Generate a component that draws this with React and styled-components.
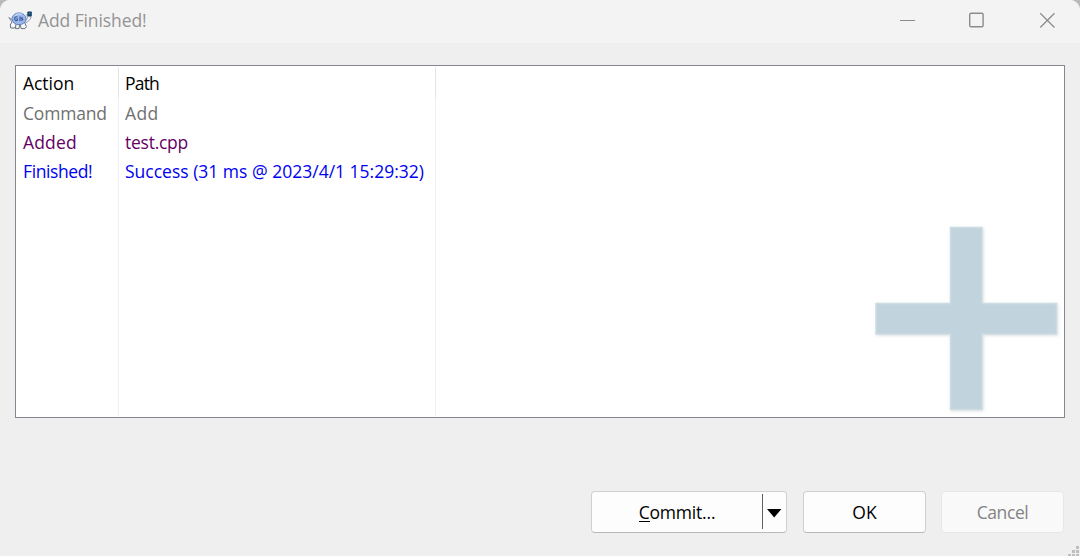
import React from "react";
import styled, { createGlobalStyle } from "styled-components";

const GlobalStyle = createGlobalStyle`
  * { box-sizing: border-box; }
  body { margin: 0; background: #b9b9b9; overflow: hidden; }
`;

const Window = styled.div`
  width: 1080px;
  height: 556px;
  display: flex;
  flex-direction: column;
  position: relative;
  overflow: hidden;
  background: #efefef;
  border-radius: 10px 10px 0 0;
  font-family: "Open Sans", "Noto Sans", sans-serif;
  font-size: 17.5px;
  font-weight: 400;
  color: #000;
`;

const TitleBar = styled.header`
  height: 43px;
  flex: none;
  display: flex;
  align-items: center;
  padding: 0 0 3px 8px;
  background: #f3f3f3;
`;

const AppIcon = styled.svg`
  width: 25px;
  height: 20px;
  display: block;
  margin-right: 5px;
`;

const Label = styled.span`
  display: inline-block;
  white-space: pre;
  letter-spacing: ${(p) => p.$track || 0}px;
`;

const Title = styled(Label)`
  flex: 1;
  color: #939393;
`;

const CaptionIcon = styled.svg`
  width: 16px;
  height: 16px;
  display: block;
  margin-right: ${(p) => p.$gap}px;
  fill: none;
  stroke: #8b8b8b;
`;

const ListPanel = styled.main`
  height: 353px;
  flex: none;
  margin: 22px 15px 0;
  display: flex;
  position: relative;
  padding: 1px 0 1px;
  border: 1px solid #828790;
  background: #fff;
`;

const Column = styled.section`
  width: ${(p) => p.$width}px;
  background: linear-gradient(#e5e5e5 31px, #e9f2fb 31px) right top / 1px 100% no-repeat;
  padding: 1px 0 0 ${(p) => p.$inset}px;
`;

const Cell = styled.div`
  height: ${(p) => p.$height || 29}px;
  line-height: ${(p) => p.$height || 29}px;
  color: ${(p) => p.$color || "#000"};
`;

const Watermark = styled.svg`
  position: absolute;
  right: 2px;
  bottom: 2px;
  width: 190px;
  height: 192px;
`;

const Footer = styled.footer`
  display: flex;
  gap: 15px;
  justify-content: flex-end;
  padding: 73px 16px 0 0;
`;

const Button = styled.button`
  width: ${(p) => p.$width}px;
  height: 42px;
  display: flex;
  align-items: center;
  justify-content: center;
  padding: 0;
  font: inherit;
  color: #000;
  background: #fdfdfd;
  border: 1px solid #d0d0d0;
  border-bottom-color: #b9b9b9;
  border-radius: 4px;

  &:disabled {
    color: #838383;
    background: #f9f9f9;
    border-color: #e8e8e8;
  }
`;

const SplitButton = styled(Button)`
  margin-right: 1px;
`;

const CommitText = styled.span`
  flex: 1;
  text-align: center;
`;

const Mnemonic = styled.span`
  border-bottom: 1px solid #000;
  display: inline-block;
  line-height: 17px;
`;

const DropPart = styled.span`
  width: 24px;
  height: 35px;
  margin-bottom: 1px;
  display: flex;
  align-items: center;
  padding: 4px 0 0 4px;
  border-left: 1px solid #5f5f5f;
`;

const SizeGrip = styled.svg`
  position: absolute;
  right: 0;
  bottom: 0;
  width: 12px;
  height: 10px;
`;

const actions = [
  { text: "Action", height: 31, track: -0.05 },
  { text: "Command", color: "#707070", track: -0.2 },
  { text: "Added", color: "#640064", track: 0.15 },
  { text: "Finished!", color: "#0000f0", track: -0.4 },
];

const paths = [
  { text: "Path", height: 31, track: -0.8 },
  { text: "Add", color: "#707070", track: 0.4 },
  { text: "test.cpp", color: "#640064", track: -0.25 },
  { text: "Success (31 ms @ 2023/4/1 15:29:32)", color: "#0000f0" },
];

function ListColumn({ cells, width, inset }) {
  return (
    <Column $width={width} $inset={inset}>
      {cells.map((c) => (
        <Cell key={c.text} $color={c.color} $height={c.height}>
          <Label $track={c.track}>{c.text}</Label>
        </Cell>
      ))}
    </Column>
  );
}

function TurtleIcon() {
  return (
    <AppIcon viewBox="0 0 25 20">
      <path d="M4 12L0.8 7.5L3 9.2L6 9.5" fill="#e8edf2" stroke="#77838f" strokeWidth="0.9" />
      <path d="M17.5 11L19.5 8L18.8 4.5L22.5 3.8L23 8L20 11.5L17 13" fill="#f2f5f8" stroke="#87909c" strokeWidth="0.9" />
      <rect x="19.4" y="1.4" width="4.4" height="5" rx="0.8" fill="#123f62" />
      <rect x="20.8" y="2.6" width="1.5" height="2" fill="#247a94" />
      <g fill="#f4f6f8" stroke="#68717d" strokeWidth="1">
        <path d="M4 12L2.2 15L2.8 18H6.5L8.5 15" />
        <path d="M8 14L7.5 18.6H11L11.5 15" />
        <path d="M12 14L13.2 18.6H17L18.4 16.5L16.5 12.5" />
      </g>
      <ellipse cx="11" cy="8.8" rx="7" ry="5.9" fill="#9bb8ee" stroke="#6480bd" strokeWidth="1" />
      <path d="M6.8 5.8Q10 2.8 14 4.4" fill="none" stroke="#c4d6fa" strokeWidth="1.3" />
      <path d="M9.4 7C7.2 6.3 6.6 7.6 6.8 9.2C7 11 8.8 11 9.4 10.2V9H8.4M12 6.6V11M14.5 7.2L13.4 8.3L14.8 9.4L13.3 10.6" fill="none" stroke="#35528d" strokeWidth="1.1" />
    </AppIcon>
  );
}

export default function App() {
  return (
    <>
      <GlobalStyle />
      <Window>
        <TitleBar>
          <TurtleIcon />
          <Title $track={-0.1}>Add Finished!</Title>
          <CaptionIcon $gap={53} viewBox="0 0 16 16"><path d="M0 8.5H15" /></CaptionIcon>
          <CaptionIcon $gap={55} viewBox="0 0 16 16"><rect x="0.7" y="1.3" width="13.4" height="13.4" rx="1.3" strokeWidth="1.4" /></CaptionIcon>
          <CaptionIcon $gap={24} viewBox="0 0 16 16"><path d="M.2 1.2L14.5 15.5M14.5 1.2L.2 15.5" strokeWidth="1.3" /></CaptionIcon>
        </TitleBar>
        <ListPanel>
          <ListColumn cells={actions} width={103} inset={7} />
          <ListColumn cells={paths} width={317} inset={6} />
          <Watermark viewBox="872 223 190 192">
            <defs>
              <filter id="soft" x="-10%" y="-10%" width="120%" height="120%">
                <feDropShadow dx="1" dy="1" stdDeviation="1.6" floodColor="#8795a0" floodOpacity="0.3" />
              </filter>
            </defs>
            <path
              d="M950.5 227.5H982V303.5H1056.5V334H982V409.5H950.5V334H876V303.5H950.5Z"
              fill="#c1d4dd" stroke="#cddce3" strokeWidth="1.4" filter="url(#soft)"
            />
          </Watermark>
        </ListPanel>
        <Footer>
          <SplitButton $width={196}>
            <CommitText><Label $track={-0.2}><Mnemonic>C</Mnemonic>ommit...</Label></CommitText>
            <DropPart>
              <svg width="15" height="9" viewBox="0 0 15 9"><path d="M0 0H14.4L7.2 8.5Z" /></svg>
            </DropPart>
          </SplitButton>
          <Button $width={123}><Label>OK</Label></Button>
          <Button $width={123} disabled><Label $track={-0.4}>Cancel</Label></Button>
        </Footer>
        <SizeGrip viewBox="0 0 12 10" fill="#bfbfbf">
          <path d="M8 0h3v3h-3zM4 4h3v3h-3zM8 4h3v3h-3zM0 8h3v2h-3zM4 8h3v2h-3zM8 8h3v2h-3z" />
        </SizeGrip>
      </Window>
    </>
  );
}
